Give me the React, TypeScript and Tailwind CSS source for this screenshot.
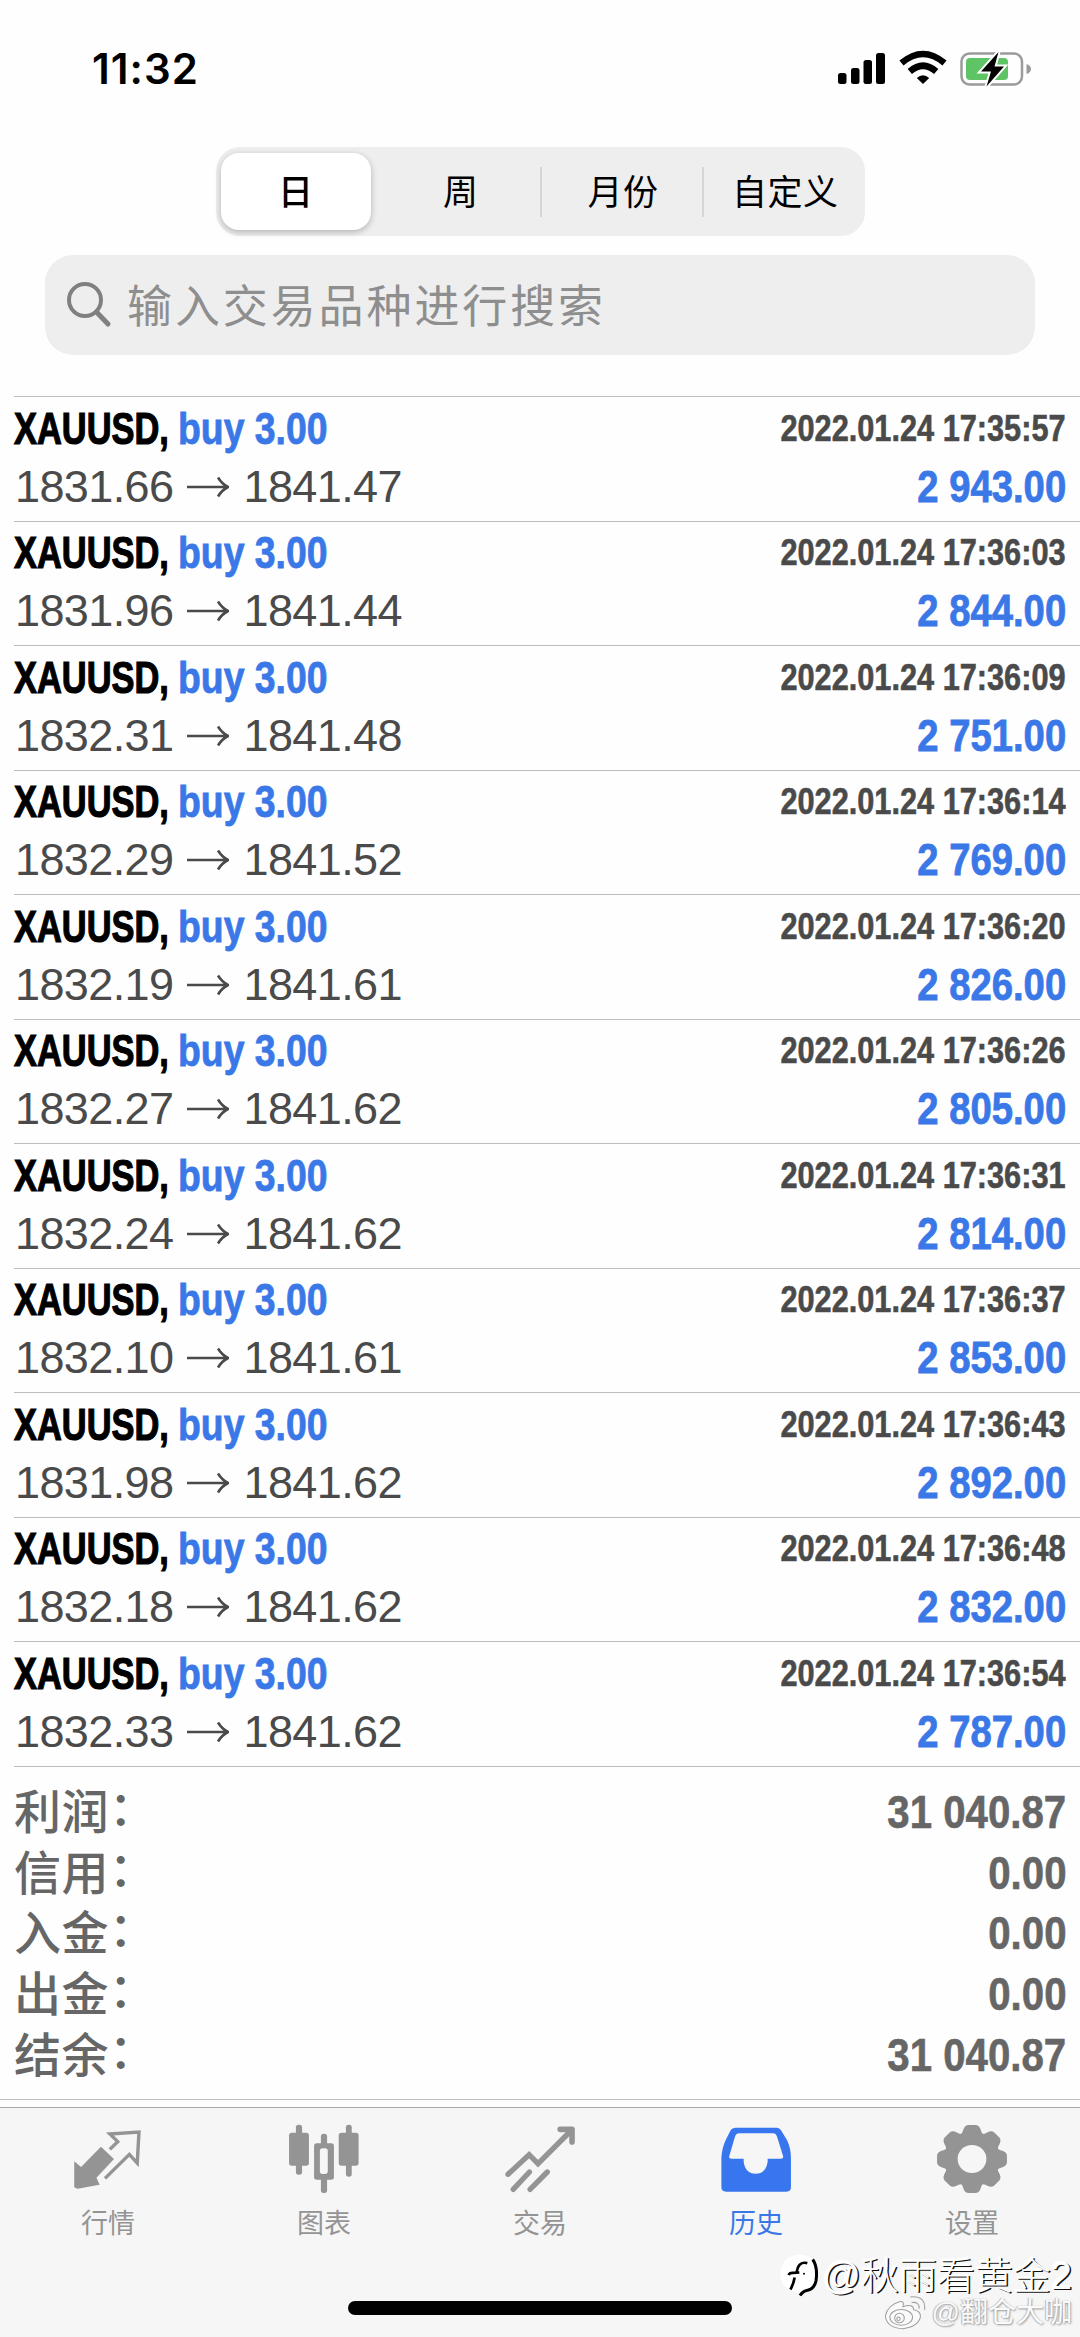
import type { ReactNode } from 'react'

type Deal = {
  open: string
  close: string
  time: string
  profit: string
}

const DEALS: Deal[] = [
  { open: '1831.66', close: '1841.47', time: '17:35:57', profit: '2 943.00' },
  { open: '1831.96', close: '1841.44', time: '17:36:03', profit: '2 844.00' },
  { open: '1832.31', close: '1841.48', time: '17:36:09', profit: '2 751.00' },
  { open: '1832.29', close: '1841.52', time: '17:36:14', profit: '2 769.00' },
  { open: '1832.19', close: '1841.61', time: '17:36:20', profit: '2 826.00' },
  { open: '1832.27', close: '1841.62', time: '17:36:26', profit: '2 805.00' },
  { open: '1832.24', close: '1841.62', time: '17:36:31', profit: '2 814.00' },
  { open: '1832.10', close: '1841.61', time: '17:36:37', profit: '2 853.00' },
  { open: '1831.98', close: '1841.62', time: '17:36:43', profit: '2 892.00' },
  { open: '1832.18', close: '1841.62', time: '17:36:48', profit: '2 832.00' },
  { open: '1832.33', close: '1841.62', time: '17:36:54', profit: '2 787.00' },
]

const TOTALS = [
  { label: '利润', value: '31 040.87' },
  { label: '信用', value: '0.00' },
  { label: '入金', value: '0.00' },
  { label: '出金', value: '0.00' },
  { label: '结余', value: '31 040.87' },
]

const PERIODS = ['日', '周', '月份', '自定义']

function StatusBar() {
  return (
    <div className="flex h-[147px] items-start justify-between pl-[92px] pr-[49px]">
      <span className="mt-[42px] font-['Inter',sans-serif] text-[42px] leading-[54px] font-semibold tracking-[1px]">
        11:32
      </span>
      <svg className="mt-[46px] h-[44px] w-[194px]" viewBox="0 0 194 44">
        <rect x="1" y="27" width="8.5" height="11" rx="2.5" />
        <rect x="14" y="22" width="8.5" height="16" rx="2.5" />
        <rect x="26.5" y="14" width="8.5" height="24" rx="2.5" />
        <rect x="39" y="7" width="9" height="31" rx="2.5" />
        <path d="M64.5 17 Q86 -1 107.5 17" fill="none" stroke="#000" strokeWidth="6.5" />
        <path d="M72.8 25.5 Q86 14 99.2 25.5" fill="none" stroke="#000" strokeWidth="6.5" />
        <path d="M86 38 L79.8 32 Q86 26.5 92.2 32 Z" />
        <rect x="124.5" y="7.5" width="60.5" height="31" rx="8" fill="none" stroke="#9b9b9b" strokeWidth="2.5" />
        <rect x="129" y="12" width="42" height="22" rx="4" fill="#5ec466" />
        <path d="M189.5 18 Q194 19.5 194 23 Q194 26.5 189.5 28 Z" fill="#9b9b9b" />
        <path
          d="M161.5 6 L144 25.5 L154 25.5 L149.5 40.5 L167 20.5 L157.5 20.5 Z"
          stroke="#fff"
          strokeWidth="4"
          paintOrder="stroke"
        />
      </svg>
    </div>
  )
}

function PeriodTabs() {
  return (
    <div className="mx-auto flex h-[89px] w-[649px] rounded-[24px] bg-[#eeeeee] text-[35px]">
      {PERIODS.map((label, i) => (
        <div key={label} className="flex flex-1 items-center">
          {i === 0 ? (
            <div className="ml-[5px] flex h-[77px] w-[150px] items-center justify-center rounded-[18px] bg-white pt-[3px] font-medium shadow-[0_2px_6px_rgba(0,0,0,0.25)]">
              {label}
            </div>
          ) : (
            <>
              <span className={`h-[50px] w-[2px] ${i > 1 ? 'bg-[#d6d6d6]' : ''}`} />
              <span className="flex-1 pt-[3px] pl-[2px] text-center tracking-[0.5px]">{label}</span>
            </>
          )}
        </div>
      ))}
    </div>
  )
}

function SearchField() {
  return (
    <div className="mx-[45px] mt-[19px] flex h-[100px] items-center rounded-[28px] bg-[#eeeeee] pl-[21px]">
      <svg className="h-[46px] w-[46px]" viewBox="0 0 46 46" fill="none" stroke="#808080">
        <circle cx="19" cy="18" r="16" strokeWidth="4" />
        <path d="M30.5 30 L42 42" strokeWidth="5" strokeLinecap="round" />
      </svg>
      <span className="ml-[15px] pt-[5px] text-[45px] leading-[60px] tracking-[2.9px] text-[#8e8e8e]">
        输入交易品种进行搜索
      </span>
    </div>
  )
}

function DealRow({ deal }: { deal: Deal }) {
  return (
    <div className="flex h-[124.545px] justify-between border-t border-[#bdbdbd] pt-[2.5px] pr-[14px] text-[45px] leading-[58px] whitespace-nowrap">
      <div>
        <div className="flex font-bold">
          <span className="w-[164px] origin-left scale-x-[0.765] [-webkit-text-stroke:1.2px_#000]">XAUUSD,</span>
          <span className="origin-left scale-x-[0.83] text-[#3b78e7] [-webkit-text-stroke:0.8px_#3b78e7]">buy 3.00</span>
        </div>
        <div className="flex items-center pl-px text-[#4a4a4a]">
          <span className="w-[172px] tracking-[-0.6px]">{deal.open}</span>
          <svg className="h-[24px] w-[42px]" viewBox="0 0 42 24" fill="none" stroke="#4a4a4a" strokeWidth="2.6">
            <path d="M0 12 H40 M31 2.5 Q35 9 41 12 Q35 15 31 21.5" />
          </svg>
          <span className="ml-[14.5px] tracking-[-0.6px]">{deal.close}</span>
        </div>
      </div>
      <div className="flex flex-col items-end font-bold">
        <span className="origin-right scale-x-[0.83] text-[37px] text-[#4a4a4a] [-webkit-text-stroke:0.6px_#4a4a4a]">
          2022.01.24 {deal.time}
        </span>
        <span className="origin-right scale-x-[0.85] text-[#3b78e7] [-webkit-text-stroke:0.8px_#3b78e7]">
          {deal.profit}
        </span>
      </div>
    </div>
  )
}

function Totals() {
  return (
    <div className="h-[333px] border-t border-[#bdbdbd] pt-[15px] pr-[14px] text-[47px] leading-[60.8px] text-[#666]">
      {TOTALS.map((row) => (
        <div key={row.label} className="flex h-[60.8px] justify-between">
          <span className="mt-px font-medium tracking-[0.5px]">
            {row.label}
            <span className="relative -top-[4px]">：</span>
          </span>
          <span className="origin-right scale-x-[0.855] font-bold [-webkit-text-stroke:0.6px_#666]">{row.value}</span>
        </div>
      ))}
    </div>
  )
}

function QuotesIcon() {
  return (
    <svg className="h-[70px] w-[74px]" viewBox="205.6 130 216 210" preserveAspectRatio="none">
      <path d="M215 245 L235 262 L293 201 L331 238 L280 294 L289 315 L225 327 Q215 326 215 320 Z" fill="#949494" />
      <path
        d="M305 296 L376 224 L399 250 L404 157 L319 163 L342 186 L319 209"
        fill="none"
        stroke="#949494"
        strokeWidth="10"
      />
    </svg>
  )
}

function ChartIcon() {
  return (
    <svg className="h-[70px] w-[74px]" viewBox="833 130 216 210" preserveAspectRatio="none" fill="#949494">
      <rect x="859" y="135" width="18" height="150" rx="8" />
      <rect x="839" y="159" width="58" height="99" rx="8" />
      <rect x="1005" y="135" width="17" height="156" rx="8" />
      <rect x="984" y="159" width="58" height="99" rx="8" />
      <rect x="932" y="162" width="18" height="178" rx="8" />
      <rect x="912" y="191" width="58" height="109" rx="8" />
      <rect x="929" y="206" width="23" height="77" rx="8" fill="#f6f6f6" />
    </svg>
  )
}

function TradeIcon() {
  return (
    <svg
      className="h-[70px] w-[74px]"
      viewBox="38 25 224 210"
      preserveAspectRatio="none"
      fill="none"
      stroke="#949494"
      strokeWidth="16"
    >
      <path d="M53 179 L117 120 L144 147 L243 49" />
      <path d="M211 44 H247 V82" strokeWidth="17" strokeLinecap="round" strokeLinejoin="round" />
      <path d="M118 172 L69 224 M172 172 L120 224" strokeLinecap="round" />
      <circle cx="53" cy="179" r="8" fill="#949494" stroke="none" />
    </svg>
  )
}

function HistoryIcon() {
  return (
    <svg
      className="h-[70px] w-[74px]"
      viewBox="519 130 216 210"
      preserveAspectRatio="none"
      fill="#3776ee"
      fillRule="evenodd"
    >
      <path d="M567 144 H688 Q696 144 700 152 L717 180 Q729 205 729 235 V323 Q729 336 716 336 H540 Q526 336 526 323 V235 Q527 205 540 178 L553 152 Q557 144 567 144 Z M578 161 Q569 161 566 170 L549 229 Q547 237 555 237 H591 V246 Q596 282 626 282 Q656 282 661 246 V237 H700 Q708 237 706 229 L688 170 Q685 161 678 161 Z" />
    </svg>
  )
}

function SettingsIcon() {
  return (
    <svg className="h-[70px] w-[74px]" viewBox="-108 -108 216 210" preserveAspectRatio="none" fill="#949494">
      <circle r="82" />
      {[0, 45, 90, 135, 180, 225, 270, 315].map((angle) => (
        <path
          key={angle}
          transform={`rotate(${angle})`}
          d="M-37 -70 Q-28 -75 -25 -89 Q-20 -102 -10 -102 H10 Q20 -102 25 -89 Q28 -75 37 -70 Z"
        />
      ))}
      <circle r="42" fill="#f6f6f6" />
    </svg>
  )
}

function TabItem({ label, active, children }: { label: string; active?: boolean; children: ReactNode }) {
  return (
    <div className={`flex flex-1 flex-col items-center ${active ? 'text-[#3b78e7]' : 'text-[#949494]'}`}>
      {children}
      <span className="mt-[11px] text-[27px] leading-[40px]">{label}</span>
    </div>
  )
}

function Watermark() {
  return (
    <div className="absolute right-[8px] bottom-[4px] flex flex-col items-end whitespace-nowrap">
      <div className="flex h-[52px] items-center">
        <svg className="h-[47px] w-[40px]" viewBox="20 30 120 140" fill="none" stroke="#000" strokeWidth="9">
          <path d="M84 38 Q137 38 137 92 Q137 145 92 152 Q30 150 27 95 Q30 40 84 38 Z" fill="#fff" stroke="none" />
          <path d="M108 63 Q80 56 76 92 M52 99 Q54 91 66 92 L84 91" strokeWidth="8" />
          <path d="M70 106 Q66 128 57 142" strokeWidth="8" />
          <path d="M124 52 Q140 74 134 116 Q129 140 109 144 Q94 147 86 160" />
          <circle cx="98" cy="95" r="3" fill="#000" stroke="none" />
        </svg>
        <span className="ml-[4px] text-[38px] leading-[52px] font-light text-white [text-shadow:1.5px_1px_0_#111,-1px_-1px_1px_#fff]">
          @秋雨看黄金2
        </span>
      </div>
      <div className="-mt-[9px] flex h-[40px] items-center">
        <svg className="h-[35px] w-[42px]" viewBox="352 145 122 100" fill="#fafafa" stroke="#a0a0a0" strokeWidth="3">
          <path d="M356 205 Q362 173 399 163 Q412 162 407 178 Q438 168 438 187 Q459 190 458 208 Q450 238 407 242 Q360 240 356 205 Z" />
          <ellipse cx="402" cy="209" rx="33" ry="23" />
          <circle cx="397" cy="211" r="14" />
          <circle cx="394" cy="213" r="5" />
          <path d="M428 150 Q474 145 470 188 M432 166 Q456 163 454 184" fill="none" />
        </svg>
        <span className="ml-[6px] text-[28px] leading-[40px] text-[#fafafa] [text-shadow:1px_1px_2px_#999,-1px_0_1px_#bbb]">
          @翻仓大咖
        </span>
      </div>
    </div>
  )
}

function TabBar() {
  return (
    <div className="relative h-[230px] border-t border-[#a9a9a9] bg-[#f6f6f6]">
      <div className="flex pt-[15px]">
        <TabItem label="行情">
          <QuotesIcon />
        </TabItem>
        <TabItem label="图表">
          <ChartIcon />
        </TabItem>
        <TabItem label="交易">
          <TradeIcon />
        </TabItem>
        <TabItem label="历史" active>
          <HistoryIcon />
        </TabItem>
        <TabItem label="设置">
          <SettingsIcon />
        </TabItem>
      </div>
      <div className="mx-auto mt-[57px] h-[14px] w-[384px] rounded-full bg-black" />
      <Watermark />
    </div>
  )
}

export default function App() {
  return (
    <div className="h-[2337px] w-[1080px] overflow-hidden bg-[#fefefe] font-['Liberation_Sans','Noto_Sans_CJK_SC',sans-serif] text-black">
      <StatusBar />
      <PeriodTabs />
      <SearchField />
      <div className="mt-[41px] pl-[14px]">
        {DEALS.map((deal) => (
          <DealRow key={deal.time} deal={deal} />
        ))}
        <Totals />
      </div>
      <div className="h-[8px] border-t border-[#bdbdbd]" />
      <TabBar />
    </div>
  )
}
